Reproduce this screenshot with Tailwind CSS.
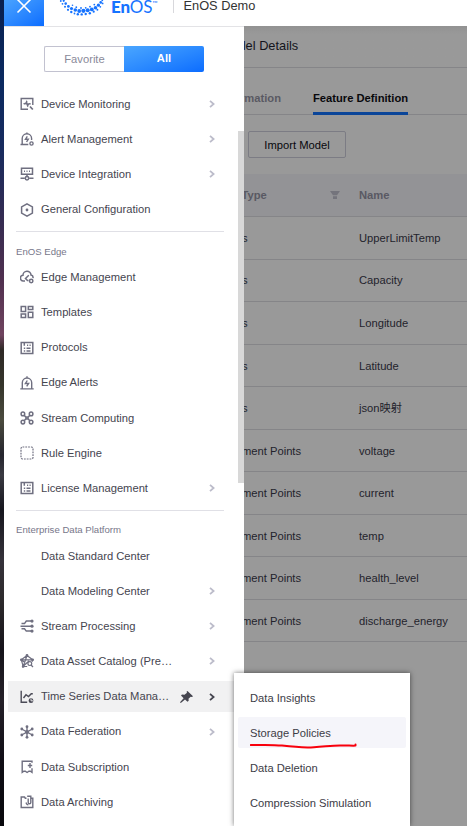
<!DOCTYPE html>
<html lang="en">
<head>
<meta charset="utf-8">
<title>EnOS Demo</title>
<script src="https://cdn.jsdelivr.net/npm/@tailwindcss/browser@4"></script>
</head>
<body class="w-[467px] h-[826px] overflow-hidden bg-white font-['Liberation_Sans','Noto_Sans_CJK_SC',sans-serif] text-[11.2px]">
<svg class="hidden">
  <symbol id="chev" viewBox="0 0 6 8"><path d="M1 .8 4.6 4 1 7.2" fill="none" stroke="currentColor" stroke-width="1.8"/></symbol>
  <symbol id="doc" viewBox="0 0 14 14"><path d="M1.2 1.5h11.6v11H1.2zM4.3 1.5v3.2M3.8 7.2h1.4M6.5 7.2h4M3.8 9.9h1.4M6.5 9.9h4M7 4.3h1.2M9.5 4.3h1.2" fill="none" stroke="currentColor" stroke-width="1.5"/></symbol>
</svg>
<div class="relative flex w-[467px] h-[826px]">
  <!-- Desktop wallpaper strip -->
  <div class="w-1 shrink-0 bg-[linear-gradient(to_bottom,#09204f_0px,#0b2a60_80px,#182b5e_150px,#352c52_220px,#50304f_280px,#70445f_335px,#2e2926_350px,#35352b_385px,#4b4b3e_420px,#25252e_455px,#3a3a42_475px,#16161e_510px,#35323a_560px,#2d2a2c_600px,#15131a_650px,#252129_700px,#100e16_760px,#08080c_826px)]"></div>
  <div class="flex w-[463px] flex-col">
    <header class="flex h-[26px] shrink-0 bg-white">
      <div class="flex w-10 justify-center bg-linear-to-br from-[#4aa3ff] to-[#0b6cff]">
        <svg class="h-[26px] w-10" viewBox="0 0 40 26" fill="none" stroke="#fff" stroke-width="1.6"><path d="M13.5-.5 26.5 12.5M26.5-.5 13.5 12.5"/></svg>
      </div>
      <svg class="ml-[14px] h-[18px] w-[50px]" viewBox="58 0 50 18" fill="#1673ff">
        <circle cx="60.8" cy="1" r=".9"/><circle cx="62.5" cy="3.8" r=".9"/><circle cx="63.7" cy=".8" r="1.1"/><circle cx="65.7" cy="3.6" r="1.3"/><circle cx="65" cy="6.8" r="1"/><circle cx="68.4" cy="6.4" r="1.4"/><circle cx="68" cy="9.8" r="1.1"/><circle cx="71.5" cy="8.5" r="1.6"/><circle cx="71.3" cy="12" r="1.2"/><circle cx="75.3" cy="10" r="1.8"/><circle cx="74.5" cy="13.5" r=".9"/><circle cx="79.2" cy="11" r="1.9"/><circle cx="77.8" cy="14.3" r="1.2"/><circle cx="83.4" cy="10.8" r="2.1"/><circle cx="81.7" cy="14.4" r="1.2"/><circle cx="85.7" cy="14" r="1.2"/><circle cx="87.7" cy="10.2" r="2"/><circle cx="89.8" cy="13.2" r="1.2"/><circle cx="91.8" cy="9.4" r="1.9"/><circle cx="93.7" cy="11.7" r="1.1"/><circle cx="95.5" cy="7.8" r="1.8"/><circle cx="97.4" cy="9.7" r="1"/><circle cx="98.4" cy="5.2" r="1.6"/><circle cx="100.3" cy="6.8" r=".9"/><circle cx="100.7" cy="2.4" r="1.3"/><circle cx="102.6" cy="3.4" r=".9"/><circle cx="102.3" cy=".3" r=".9"/><circle cx="72.5" cy="5.3" r=".8"/><circle cx="76.3" cy="7.2" r=".9"/><circle cx="81" cy="8" r=".9"/><circle cx="85.7" cy="7.8" r=".9"/><circle cx="90" cy="6.7" r=".9"/><circle cx="94.3" cy="4.6" r=".9"/>
      </svg>
      <div class="ml-[3px] flex w-[49px] text-[#1673ff] font-[Lato] text-[17px] leading-[14px] tracking-[-0.2px]"><span class="font-black">En</span><span class="font-normal">OS</span><span class="text-[7px] leading-[7px]">™</span></div>
      <div class="ml-[13px] h-[13px] w-px bg-[#d8d8dc]"></div>
      <div class="ml-[9.5px] text-[12.8px] leading-[12px] text-[#333]">EnOS Demo</div>
    </header>
    <div class="flex min-h-0 flex-1">
      <!-- Navigation drawer -->
      <nav class="relative w-60 shrink-0 border-t border-[#e3e3e6] bg-white text-[#45454f]">
        <div class="absolute right-0 top-[104px] h-[352px] w-[6px] bg-[#d8d8d8]"></div>
        <div class="ml-10 mt-[19px] flex h-[26px] w-40 text-center leading-[26px]">
          <div class="w-20 rounded-l-[2px] border border-r-0 border-[#c2c2d0] leading-[25px] text-[#8a8a99]">Favorite</div>
          <div class="w-20 rounded-r-[2px] bg-linear-to-br from-[#4aa6ff] to-[#0b6cff] font-bold text-white leading-[25px]">All</div>
        </div>
        <div class="mt-[14.4px] [&>div]:flex [&>div]:h-[35.2px] [&>div]:items-center [&>div]:pl-4 [&>div>svg:first-child]:mr-[7px] [&>div>svg:first-child]:h-[14px] [&>div>svg:first-child]:w-[14px] [&>div>svg:first-child]:text-[#6f6f80]">
          <div><svg viewBox="0 0 14 14" fill="none" stroke="currentColor" stroke-width="1.4"><path d="M8 12.3H1.2V1.5h11.6V8"/><path d="m5.5 5.5 3 2.8M10 9.5l2.8 3" stroke-width="1.8"/><path d="M6.3 3.8a1.7 1.7 0 0 1-2.6 2.4M8 9.8a1.7 1.7 0 0 1 2.6-2.5"/></svg><span class="w-[168px]">Device Monitoring</span><svg class="h-2 w-[6px] text-[#bcbcca]"><use href="#chev"/></svg></div>
          <div><svg viewBox="0 0 14 14" fill="none" stroke="currentColor" stroke-width="1.4"><path d="M.5 12.5h7.8M2.2 12V6.5a4.7 4.7 0 0 1 9.4 0V8M6.9 2V.5M7.3 4.3 5.5 7.2h2.8L6.6 10"/><circle cx="11.5" cy="11.5" r="1.6"/></svg><span class="w-[168px]">Alert Management</span><svg class="h-2 w-[6px] text-[#bcbcca]"><use href="#chev"/></svg></div>
          <div><svg viewBox="0 0 14 14" fill="none" stroke="currentColor" stroke-width="1.5"><path d="M1.5 1.2h11v6h-11zM4 4.2h1M6.5 4.2h1M9 4.2h1M7 7.2v2.5M.5 11.3h4.3M9.2 11.3h4.3"/><circle cx="7" cy="11.3" r="1.7"/></svg><span class="w-[168px]">Device Integration</span><svg class="h-2 w-[6px] text-[#bcbcca]"><use href="#chev"/></svg></div>
          <div><svg viewBox="0 0 14 14" fill="none" stroke="currentColor" stroke-width="1.5"><path d="m7 .9 5.4 3v6.2L7 13.1l-5.4-3V3.9z"/><circle cx="7" cy="7" r="1.4" fill="currentColor" stroke="none"/></svg><span>General Configuration</span></div>
        </div>
        <div class="ml-3 mr-5 mt-[3.8px] h-[28.6px] border-t border-[#e0e0e6] pt-[14px] text-[9.6px] leading-[11px] text-[#77778a]">EnOS Edge</div>
        <div class="[&>div]:flex [&>div]:h-[35.2px] [&>div]:items-center [&>div]:pl-4 [&>div>svg:first-child]:mr-[7px] [&>div>svg:first-child]:h-[14px] [&>div>svg:first-child]:w-[14px] [&>div>svg:first-child]:text-[#6f6f80]">
          <div><svg viewBox="0 0 14 14" fill="none" stroke="currentColor" stroke-width="1.5"><path d="M8.5 10.5h-1l-2-2 3.3-3.2M5 10.9H3.5A2.8 2.8 0 0 1 3 5.3a4 4 0 0 1 8-.2 2.6 2.6 0 0 1 2 3"/><circle cx="11.2" cy="11" r="1.7"/></svg><span>Edge Management</span></div>
          <div><svg viewBox="0 0 14 14" fill="none" stroke="currentColor" stroke-width="1.5"><path d="M1.2 1.4h4.4v5H1.2zM8.3 1.4h4.5v3H8.3zM1.2 9.1h4.4v3.3H1.2zM8.3 7.2h4.5v5.2H8.3z"/></svg><span>Templates</span></div>
          <div><svg><use href="#doc"/></svg><span>Protocols</span></div>
          <div><svg viewBox="0 0 14 14" fill="none" stroke="currentColor" stroke-width="1.4"><path d="M.3 12.9h13.4M2.3 12.5V6.7a4.7 4.7 0 0 1 9.4 0v5.8M7 2V.3M7.3 4.5 5.4 7.5h3.2L6.7 10.4"/></svg><span>Edge Alerts</span></div>
          <div class="pt-px"><svg viewBox="0 0 14 14" fill="none" stroke="currentColor" stroke-width="1.5"><circle cx="2.9" cy="2.9" r="1.8"/><circle cx="11.1" cy="2.9" r="1.8"/><circle cx="2.9" cy="11.1" r="1.8"/><circle cx="11.1" cy="11.1" r="1.8"/><path d="m4.2 4.2 1.5 1.7h2.6l1.5-1.7M4.2 9.8l1.5-1.7h2.6l1.5 1.7M6 5.8v2.4M8 5.8v2.4"/></svg><span>Stream Computing</span></div>
          <div><svg viewBox="0 0 14 14" fill="none" stroke="currentColor" stroke-width="1.2" stroke-dasharray="1.8 1"><rect x="1" y="1" width="12" height="12" rx="1.5"/></svg><span>Rule Engine</span></div>
          <div><svg><use href="#doc"/></svg><span class="w-[168px]">License Management</span><svg class="h-2 w-[6px] text-[#bcbcca]"><use href="#chev"/></svg></div>
        </div>
        <div class="ml-3 mr-5 mt-[4px] h-[28.4px] border-t border-[#e0e0e6] pt-[13.5px] text-[9.6px] leading-[11px] text-[#77778a]">Enterprise Data Platform</div>
        <div class="[&>div]:flex [&>div]:h-[35.2px] [&>div]:items-center [&>div]:pl-4 [&>div>svg:first-child]:mr-[7px] [&>div>svg:first-child]:h-[14px] [&>div>svg:first-child]:w-[14px] [&>div>svg:first-child]:text-[#6f6f80]">
          <div class="pt-px"><span class="ml-[21px]">Data Standard Center</span></div>
          <div><span class="ml-[21px] w-[168px]">Data Modeling Center</span><svg class="h-2 w-[6px] text-[#bcbcca]"><use href="#chev"/></svg></div>
          <div><svg viewBox="0 0 14 14" fill="none" stroke="currentColor" stroke-width="1.5"><path d="M1.5 4.6h3l1.8-2.5h5M.5 7.3h11.3M1.5 9.8h3l1.8 2.3h5"/><g fill="currentColor" stroke="none"><circle cx="12" cy="2.1" r="1.6"/><circle cx="12" cy="7.2" r="1.6"/><circle cx="12" cy="12.1" r="1.6"/></g></svg><span class="w-[168px]">Stream Processing</span><svg class="h-2 w-[6px] text-[#bcbcca]"><use href="#chev"/></svg></div>
          <div><svg viewBox="0 0 14 14" fill="none" stroke="currentColor" stroke-width="1.2"><path d="M7 1.5 1.3 5.8 3.2 12.5h4M7 1.5l5.7 4.3-.7 2M7 1.5 3.4 12 9 7M1.3 5.8h11.4M1.5 6l5 3.8"/><circle cx="9.8" cy="9.6" r="1.9"/><path d="m11 11 2 2"/><g fill="currentColor"><circle cx="7" cy="1.5" r=".8"/><circle cx="1.4" cy="5.8" r=".8"/><circle cx="12.6" cy="5.8" r=".8"/><circle cx="3.2" cy="12.4" r=".8"/></g></svg><span class="w-[168px]">Data Asset Catalog (Pre…</span><svg class="h-2 w-[6px] text-[#bcbcca]"><use href="#chev"/></svg></div>
          <div class="bg-[linear-gradient(#f1f1f2,#f1f1f2)] bg-size-[236px_31px] bg-position-[4px_2px] bg-no-repeat"><svg viewBox="0 0 14 14" fill="none" stroke="#4b4b57" stroke-width="1.4"><path d="M1.2.8v11.5h6M3.5 8 6 4.8l2.5 1.8 2.8-2.9h1.5"/><circle cx="11" cy="10.7" r="2.4" fill="#4b4b57" stroke="none"/><path d="M11 8.8v2h2" stroke="#f1f1f2" stroke-width=".9"/></svg><span class="w-[139px]">Time Series Data Mana…</span><svg class="h-3 w-[14px]" viewBox="0 0 14 12" fill="#45454f"><path d="M7.5 0 13 5.2l-1 .8-1.3-.3-2.2 2.1.2 2-1.2 1L5 8.4.8 12 0 11.3 3.6 7.2 1 4.4l1-.8 2.5.2L7 1.7 6.5.8z"/></svg><svg class="ml-[15px] h-2 w-[6px] text-[#45454f]"><use href="#chev"/></svg></div>
          <div><svg viewBox="0 0 14 14" fill="none" stroke="currentColor" stroke-width="1.4"><path d="M7 2v10M1.7 4l10.6 6M12.3 4 1.7 10"/><g fill="currentColor" stroke="none"><circle cx="7" cy="1.7" r="1.4"/><circle cx="7" cy="12.3" r="1.4"/><circle cx="1.8" cy="4" r="1.4"/><circle cx="12.2" cy="4" r="1.4"/><circle cx="1.8" cy="10" r="1.4"/><circle cx="12.2" cy="10" r="1.4"/><circle cx="7" cy="7" r="2"/></g></svg><span class="w-[168px]">Data Federation</span><svg class="h-2 w-[6px] text-[#bcbcca]"><use href="#chev"/></svg></div>
          <div><svg viewBox="0 0 14 14" fill="none" stroke="currentColor" stroke-width="1.4"><path d="M12 2.8V1.3H2.2v11l1.6-1.1h1.5l1.8 1.3 1.8-1.3h1.5l1.6 1.1V8.3M10 3v5M7.8 5.5h4.4"/></svg><span>Data Subscription</span></div>
          <div><svg viewBox="0 0 14 14" fill="none" stroke="currentColor" stroke-width="1.4"><path d="M6.5 3.2H5.3L4.5 2H1.2v10.5h11.6V3.2h-1.3M7.2 1.2h3.6v6.3a1.3 1.3 0 0 1-2.6 0V3.5M6.3 7.5a2 2 0 0 0 2 2.3"/></svg><span>Data Archiving</span></div>
        </div>
      </nav>
      <!-- Dimmed page -->
      <main class="w-[223px] overflow-hidden bg-[#999] text-[#23232c]">
        <div class="flex h-[41.5px] items-center border-b border-[#858588] bg-linear-to-b from-[#929292] to-[#999] to-20% pb-px text-[12.8px] text-[#14141c]"><span class="-ml-[5.5px] whitespace-nowrap">del Details</span></div>
        <div class="flex h-[47px] border-b border-[#858588] font-bold text-[#595963]">
          <div class="flex w-[37px] justify-end pt-[22px] whitespace-nowrap">rmation</div>
          <div class="ml-[32px] h-[47.5px] border-b-[3px] border-[#0a4599] pt-[22px] text-[#08080c] whitespace-nowrap">Feature Definition</div>
        </div>
        <div class="ml-1 mt-[16.5px] h-[27px] w-[98px] rounded-[2px] border border-[#7c7c84] text-center leading-[26px] text-[#08080c]">Import Model</div>
        <div class="mt-4 flex h-[43px] items-center border-b border-[#858588] bg-[#939396] font-bold text-[#595963]">
          <span class="-ml-[2.5px] w-[88.5px]">Type</span>
          <svg class="h-2 w-[10px]" viewBox="0 0 10 8" fill="#74747c"><path d="M0 0h10L7 4.2H3zM3 5.2h4V8H3z"/></svg>
          <span class="ml-[19px]">Name</span>
        </div>
        <div class="[&>div]:flex [&>div]:h-[42.56px] [&>div]:items-center [&>div]:border-b [&>div]:border-[#858588] [&>div]:pt-px [&>div]:whitespace-nowrap [&_span:first-child]:-ml-[2px] [&_span:first-child]:w-[117px]">
          <div><span>s</span><span>UpperLimitTemp</span></div>
          <div><span>s</span><span>Capacity</span></div>
          <div><span>s</span><span>Longitude</span></div>
          <div><span>s</span><span>Latitude</span></div>
          <div><span>s</span><span>json映射</span></div>
          <div><span>ment Points</span><span>voltage</span></div>
          <div><span>ment Points</span><span>current</span></div>
          <div><span>ment Points</span><span>temp</span></div>
          <div><span>ment Points</span><span>health_level</span></div>
          <div><span>ment Points</span><span>discharge_energy</span></div>
        </div>
      </main>
    </div>
  </div>
  <!-- Submenu flyout -->
  <div class="absolute left-[234px] top-[673px] h-[153px] w-[176px] bg-white px-1 pt-[9px] text-[#3c3c46] shadow-[0_0_5px_rgba(0,0,0,0.55)]">
    <div class="mb-1 flex h-[31.2px] items-center pl-3 pt-px">Data Insights</div>
    <div class="relative mb-1 flex h-[31.2px] items-center rounded-[2px] bg-[#f5f5fa] pl-3 pt-px">Storage Policies
      <svg class="absolute left-[12px] top-[26px] h-[6px] w-[108px]" viewBox="0 0 108 6" fill="none" stroke="#f8000c" stroke-width="2" stroke-linecap="round" stroke-linejoin="round"><path d="M.8 2C12 2 22 1.4 32 2.6S52 5 64 4.2 82 2.4 90 2.4s12 .4 15.5.2V1.5"/></svg>
    </div>
    <div class="mb-1 flex h-[31.2px] items-center pl-3">Data Deletion</div>
    <div class="flex h-[31.2px] items-center pl-3 pt-px">Compression Simulation</div>
  </div>
</div>
</body>
</html>
